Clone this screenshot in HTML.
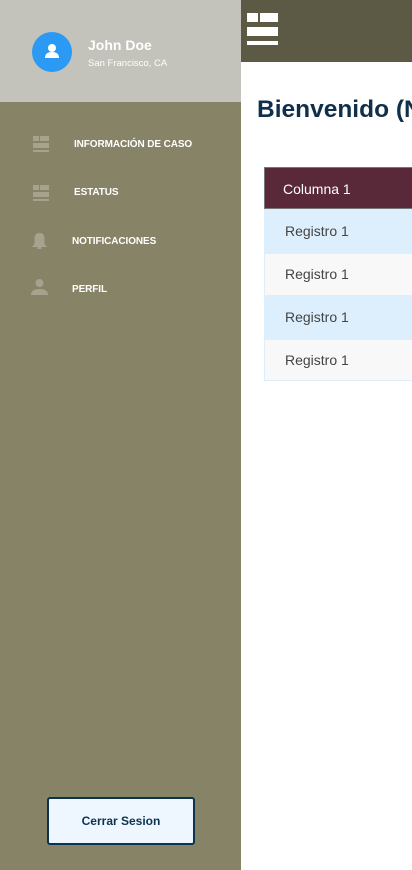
<!DOCTYPE html>
<html><head><style>
*{margin:0;padding:0;box-sizing:border-box}
html,body{width:412px;height:870px;overflow:hidden}
body{position:relative;font-family:"Liberation Sans",sans-serif;background:#fff}
.wrap{position:absolute;left:0;top:0;width:412px;height:870px;overflow:hidden}
.sb{position:absolute;left:0;top:0;width:241px;height:870px;background:#878367}
.hd{position:absolute;left:0;top:0;width:241px;height:102px;background:#c3c2bb}
.av{position:absolute;left:32px;top:32px;width:40px;height:40px;border-radius:50%;background:#2a9af5}
.nm{position:absolute;left:88px;top:37px;color:#fff;font-weight:bold;font-size:14px}
.loc{position:absolute;left:88px;top:58px;color:#fff;font-size:9.5px}
.it{position:absolute;color:#fff;font-weight:bold;font-size:10px;letter-spacing:-0.1px}
.ic{position:absolute}
.top{position:absolute;left:241px;top:0;width:171px;height:62px;background:#5c5a44}
h1{position:absolute;left:257px;top:96px;font-size:24.5px;color:#0f2f4a;white-space:nowrap}
.tb{position:absolute;left:264px;top:167px;width:148px;overflow:hidden}
.tbi{width:180px}
.r{height:43px;padding-left:20px;font-size:14px;color:#444;line-height:43px;border-left:1px solid #dceefc}
.btn{position:absolute;left:47px;top:797px;width:148px;height:48px;border:2px solid #0b3350;border-radius:3px;background:#eef6ff;color:#0b3350;font-weight:bold;font-size:12px;text-align:center;line-height:44px}
</style></head><body><div class="wrap">
<div class="sb"></div>
<div class="hd"></div>
<div class="av"><svg width="40" height="40"><circle cx="20" cy="16" r="4" fill="#fff"/><path d="M13 26q0-6 7-6t7 6z" fill="#fff"/></svg></div>
<div class="nm">John Doe</div>
<div class="loc">San Francisco, CA</div>
<svg class="ic" style="left:33px;top:136px" width="16" height="16"><rect x="0" y="0" width="6" height="5" fill="#a5a38d"/><rect x="7" y="0" width="9" height="5" fill="#a5a38d"/><rect x="0" y="7" width="16" height="5" fill="#a5a38d"/><rect x="0" y="14" width="16" height="2" fill="#a5a38d"/></svg>
<div class="it" style="left:74px;top:139px">INFORMACIÓN DE CASO</div>
<svg class="ic" style="left:33px;top:185px" width="16" height="16"><rect x="0" y="0" width="6" height="5" fill="#a5a38d"/><rect x="7" y="0" width="9" height="5" fill="#a5a38d"/><rect x="0" y="7" width="16" height="5" fill="#a5a38d"/><rect x="0" y="14" width="16" height="2" fill="#a5a38d"/></svg>
<div class="it" style="left:74px;top:187px">ESTATUS</div>
<svg class="ic" style="left:31px;top:232px" width="17" height="18"><path d="M8.5 1q5 0 5 6v5l2.5 3H1l2.5-3V7q0-6 5-6z" fill="#a5a38d"/><rect x="6.5" y="15" width="4" height="2" fill="#a5a38d"/></svg>
<div class="it" style="left:72px;top:236px">NOTIFICACIONES</div>
<svg class="ic" style="left:31px;top:278px" width="17" height="18"><circle cx="8.5" cy="5" r="4" fill="#a5a38d"/><path d="M0 17q0-6 8.5-6t8.5 6z" fill="#a5a38d"/></svg>
<div class="it" style="left:72px;top:284px">PERFIL</div>
<div class="btn">Cerrar Sesion</div>
<div class="top"><svg style="position:absolute;left:6px;top:13px" width="32" height="32"><rect x="0" y="0" width="11" height="9" fill="#fff"/><rect x="13" y="0" width="18" height="9" fill="#fff"/><rect x="0" y="14" width="31" height="9" fill="#fff"/><rect x="0" y="28" width="31" height="4" fill="#fff"/></svg></div>
<h1>Bienvenido (Nombre)</h1>
<div class="tb"><div class="tbi">
<div class="r" style="background:#5a2939;color:#fff;height:42px;line-height:42px;border:1px solid #777;padding-left:18px">Columna 1</div>
<div class="r" style="background:#ddeffd;height:45px;line-height:45px">Registro 1</div>
<div class="r" style="background:#f8f8f8;height:41px;line-height:41px">Registro 1</div>
<div class="r" style="background:#ddeffd;height:45px;line-height:45px">Registro 1</div>
<div class="r" style="background:#f8f8f8;height:41px;line-height:41px;border-bottom:1px solid #dceefc">Registro 1</div>
</div></div>
</div></body></html>
